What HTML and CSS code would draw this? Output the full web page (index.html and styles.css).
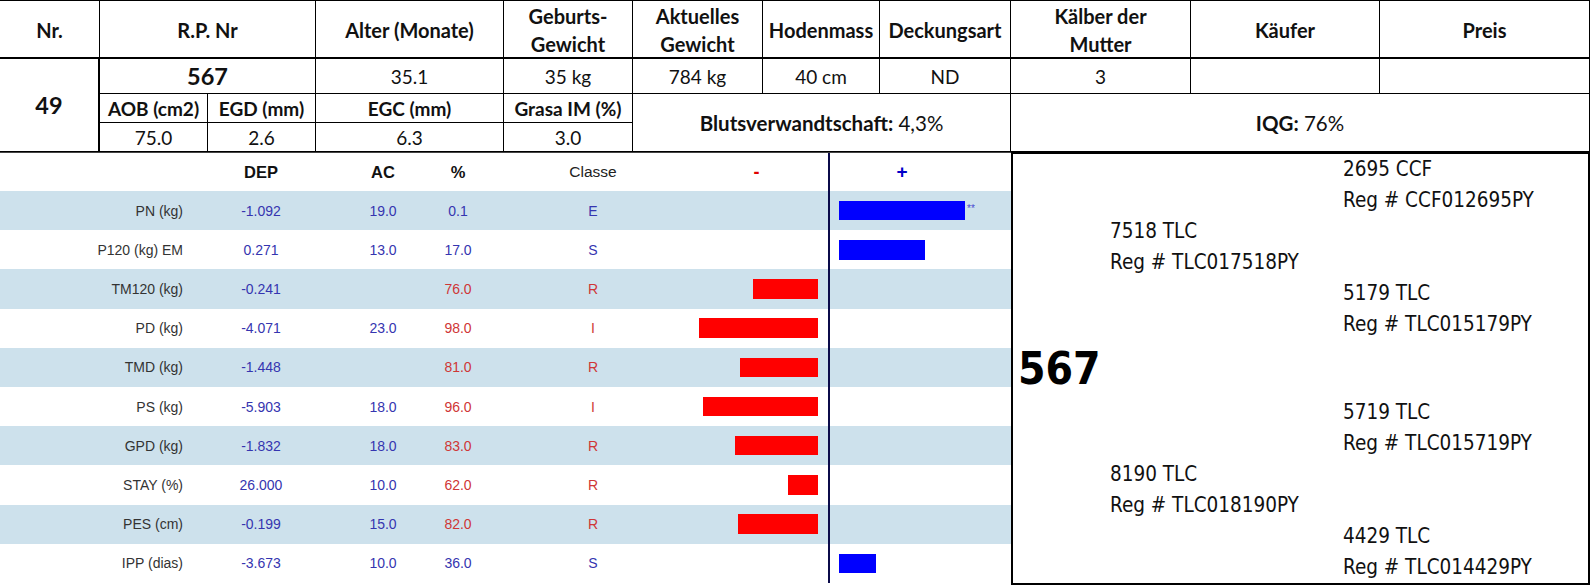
FILE: index.html
```html
<!DOCTYPE html>
<html lang="de">
<head>
<meta charset="utf-8">
<title>Stier 567</title>
<link rel="stylesheet" href="styles.css">
</head>
<body>
<div class="sheet">
  <div class="top">
    <div class="c h">Nr.</div>
    <div class="c h s2">R.P. Nr</div>
    <div class="c h">Alter (Monate)</div>
    <div class="c h">Geburts-<br>Gewicht</div>
    <div class="c h">Aktuelles<br>Gewicht</div>
    <div class="c h">Hodenmass</div>
    <div class="c h">Deckungsart</div>
    <div class="c h">Kälber der<br>Mutter</div>
    <div class="c h">Käufer</div>
    <div class="c h">Preis</div>

    <div class="c big r3 nr">49</div>
    <div class="c big s2">567</div>
    <div class="c">35.1</div>
    <div class="c">35 kg</div>
    <div class="c">784 kg</div>
    <div class="c">40 cm</div>
    <div class="c">ND</div>
    <div class="c">3</div>
    <div class="c"></div>
    <div class="c"></div>

    <div class="c b">AOB (cm2)</div>
    <div class="c b">EGD (mm)</div>
    <div class="c b">EGC (mm)</div>
    <div class="c b">Grasa IM (%)</div>
    <div class="c s3 r2 wide"><b>Blutsverwandtschaft:</b>&nbsp;4,3%</div>
    <div class="c s3 r2 wide"><b>IQG:</b>&nbsp;76%</div>

    <div class="c">75.0</div>
    <div class="c">2.6</div>
    <div class="c">6.3</div>
    <div class="c">3.0</div>
  </div>

  <div class="bottom">
    <div class="epd">
      <div class="erow ehead">
        <div class="lbl"></div>
        <div class="mid hb">DEP</div>
        <div class="mid hb">AC</div>
        <div class="mid hb">%</div>
        <div class="mid hn">Classe</div>
        <div class="neg"><span class="minus">-</span></div>
        <div class="pos"><span class="plus">+</span></div>
      </div>

      <div class="erow alt">
        <div class="lbl">PN (kg)</div>
        <div class="mid bl">-1.092</div>
        <div class="mid bl">19.0</div>
        <div class="mid bl">0.1</div>
        <div class="mid bl">E</div>
        <div class="neg"></div>
        <div class="pos"><span class="bar pb" style="width:126px"></span><span class="stars">**</span></div>
      </div>
      <div class="erow">
        <div class="lbl">P120 (kg) EM</div>
        <div class="mid bl">0.271</div>
        <div class="mid bl">13.0</div>
        <div class="mid bl">17.0</div>
        <div class="mid bl">S</div>
        <div class="neg"></div>
        <div class="pos"><span class="bar pb" style="width:86px"></span></div>
      </div>
      <div class="erow alt">
        <div class="lbl">TM120 (kg)</div>
        <div class="mid bl">-0.241</div>
        <div class="mid bl"></div>
        <div class="mid rd">76.0</div>
        <div class="mid rd">R</div>
        <div class="neg"><span class="bar nb" style="width:65px"></span></div>
        <div class="pos"></div>
      </div>
      <div class="erow">
        <div class="lbl">PD (kg)</div>
        <div class="mid bl">-4.071</div>
        <div class="mid bl">23.0</div>
        <div class="mid rd">98.0</div>
        <div class="mid rd">I</div>
        <div class="neg"><span class="bar nb" style="width:120px"></span></div>
        <div class="pos"></div>
      </div>
      <div class="erow alt">
        <div class="lbl">TMD (kg)</div>
        <div class="mid bl">-1.448</div>
        <div class="mid bl"></div>
        <div class="mid rd">81.0</div>
        <div class="mid rd">R</div>
        <div class="neg"><span class="bar nb" style="width:78px"></span></div>
        <div class="pos"></div>
      </div>
      <div class="erow">
        <div class="lbl">PS (kg)</div>
        <div class="mid bl">-5.903</div>
        <div class="mid bl">18.0</div>
        <div class="mid rd">96.0</div>
        <div class="mid rd">I</div>
        <div class="neg"><span class="bar nb" style="width:115px"></span></div>
        <div class="pos"></div>
      </div>
      <div class="erow alt">
        <div class="lbl">GPD (kg)</div>
        <div class="mid bl">-1.832</div>
        <div class="mid bl">18.0</div>
        <div class="mid rd">83.0</div>
        <div class="mid rd">R</div>
        <div class="neg"><span class="bar nb" style="width:83px"></span></div>
        <div class="pos"></div>
      </div>
      <div class="erow">
        <div class="lbl">STAY (%)</div>
        <div class="mid bl">26.000</div>
        <div class="mid bl">10.0</div>
        <div class="mid rd">62.0</div>
        <div class="mid rd">R</div>
        <div class="neg"><span class="bar nb" style="width:30px"></span></div>
        <div class="pos"></div>
      </div>
      <div class="erow alt">
        <div class="lbl">PES (cm)</div>
        <div class="mid bl">-0.199</div>
        <div class="mid bl">15.0</div>
        <div class="mid rd">82.0</div>
        <div class="mid rd">R</div>
        <div class="neg"><span class="bar nb" style="width:80px"></span></div>
        <div class="pos"></div>
      </div>
      <div class="erow">
        <div class="lbl">IPP (dias)</div>
        <div class="mid bl">-3.673</div>
        <div class="mid bl">10.0</div>
        <div class="mid bl">36.0</div>
        <div class="mid bl">S</div>
        <div class="neg"></div>
        <div class="pos"><span class="bar pb" style="width:37px"></span></div>
      </div>
    </div>

    <div class="ped">
      <div class="pn g3 r1">2695 CCF<br>Reg # CCF012695PY</div>
      <div class="pn g2 r2p">7518 TLC<br>Reg # TLC017518PY</div>
      <div class="pn g3 r3p">5179 TLC<br>Reg # TLC015179PY</div>
      <div class="pself r4p">567</div>
      <div class="pn g3 r5p">5719 TLC<br>Reg # TLC015719PY</div>
      <div class="pn g2 r6p">8190 TLC<br>Reg # TLC018190PY</div>
      <div class="pn g3 r7p">4429 TLC<br>Reg # TLC014429PY</div>
    </div>
  </div>
</div>
</body>
</html>
```

FILE: styles.css
```css
* { box-sizing: border-box; }
html, body { margin: 0; padding: 0; background: #fff; }
body { width: 1592px; height: 585px; overflow: hidden; }

.sheet { width: 1590px; }

/* ---------- top table ---------- */
.top {
  display: grid;
  grid-template-columns: 100px 108px 108px 188px 129px 130px 117px 131px 180px 189px 210px;
  grid-template-rows: 58px 35px 29px 29px;
  border-top: 1px solid #000;
  font-family: Lato, "Liberation Sans", sans-serif;
  font-size: 19px;
  color: #111;
}
.c {
  display: flex;
  align-items: center;
  justify-content: center;
  text-align: center;
  border-right: 1px solid #000;
  border-bottom: 1px solid #000;
  white-space: nowrap;
}
.h {
  font-weight: 700;
  font-size: 20px;
  line-height: 28px;
  border-bottom: 2px solid #000;
  padding-top: 1px;
}
.b { font-weight: 700; }
.wide { font-size: 20.5px; }
.big { font-weight: 700; font-size: 23.5px; }
.nr { border-right: 2px solid #000; }
.s2 { grid-column: span 2; }
.s3 { grid-column: span 3; }
.r2 { grid-row: span 2; }
.r3 { grid-row: span 3; }

/* ---------- bottom ---------- */
.bottom {
  display: flex;
  border-top: 1px solid #444;
  height: 433px;
}
.epd {
  width: 1011px;
  font-family: "Liberation Sans", Arial, sans-serif;
  font-size: 14px;
}
.erow {
  display: grid;
  grid-template-columns: 185px 152px 92px 58px 212px 129px 183px;
  height: 39.2px;
  align-items: stretch;
}
.ehead { height: 38px; }
.erow.alt { background: #cde1ec; }
.erow > div { display: flex; align-items: center; }
.lbl { justify-content: flex-end; padding-right: 2px; color: #333; }
.mid { justify-content: center; }
.hb { font-weight: 700; font-size: 16.5px; color: #111; }
.hn { font-size: 15.5px; color: #222; }
.bl { color: #3535b0; }
.rd { color: #cf3636; }
.neg { justify-content: flex-end; padding-right: 10px; }
.pos { border-left: 2px solid #0b0b4a; padding-left: 9px; }
.ehead .neg { justify-content: center; padding-right: 14px; }
.ehead .pos { justify-content: center; padding-left: 0; padding-right: 37px; }
.minus { color: #e00000; font-weight: 700; font-size: 18px; }
.plus { color: #0000c8; font-weight: 700; font-size: 19px; }
.bar { display: block; height: 19.5px; }
.nb { background: #ff0000; }
.pb { background: #0000ff; }
.stars { color: #4a4ad0; font-size: 10px; line-height: 10px; align-self: flex-start; margin-top: 13px; margin-left: 2px; }

/* ---------- pedigree ---------- */
.ped {
  width: 579px;
  border: 2px solid #000;
  margin-top: -1px;
  display: grid;
  grid-template-columns: 92px 233px 1fr;
  grid-template-rows: repeat(7, 1fr);
  padding-left: 5px;
  font-family: "DejaVu Sans Condensed", "DejaVu Sans", sans-serif;
  font-stretch: condensed;
  font-size: 20.5px;
  line-height: 31px;
  color: #111;
}
.pn { align-self: center; white-space: nowrap; }
.g2 { grid-column: 2; }
.g3 { grid-column: 3; }
.r1 { grid-row: 1; }
.r2p { grid-row: 2; }
.r3p { grid-row: 3; }
.r4p { grid-row: 4; }
.r5p { grid-row: 5; }
.r6p { grid-row: 6; }
.r7p { grid-row: 7; }
.pself {
  grid-column: 1;
  align-self: center;
  font-weight: 700;
  font-size: 44px;
  line-height: 50px;
  color: #000;
  white-space: nowrap;
}
```
